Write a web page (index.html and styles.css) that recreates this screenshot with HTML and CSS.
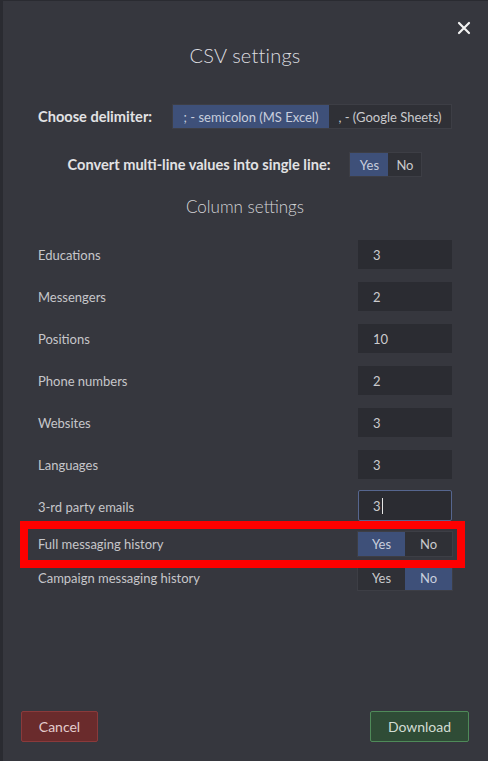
FILE: index.html
```html
<!DOCTYPE html>
<html>
<head>
<meta charset="utf-8">
<link rel="stylesheet" href="styles.css">
</head>
<body>
<div class="panel">
  <button class="close" aria-label="Close">
    <svg width="14" height="14" viewBox="0 0 14 14"><path d="M2 2 L12 12 M12 2 L2 12" stroke="#f2f2f2" stroke-width="2.2" stroke-linecap="round"/></svg>
  </button>
  <h1 class="title">CSV settings</h1>

  <div class="delim-row">
    <span class="strong-label">Choose delimiter:</span>
    <div class="seg seg-delim">
      <span class="seg-item active">; - semicolon (MS Excel)</span>
      <span class="seg-item">, - (Google Sheets)</span>
    </div>
  </div>

  <div class="convert-row">
    <span class="strong-label">Convert multi-line values into single line:</span>
    <div class="seg seg-small">
      <span class="seg-item active yes">Yes</span>
      <span class="seg-item no">No</span>
    </div>
  </div>

  <h2 class="subtitle">Column settings</h2>

  <div class="rows">
    <div class="row"><span class="label">Educations</span><div class="input">3</div></div>
    <div class="row"><span class="label">Messengers</span><div class="input">2</div></div>
    <div class="row"><span class="label">Positions</span><div class="input">10</div></div>
    <div class="row"><span class="label">Phone numbers</span><div class="input">2</div></div>
    <div class="row"><span class="label">Websites</span><div class="input">3</div></div>
    <div class="row"><span class="label">Languages</span><div class="input">3</div></div>
    <div class="row"><span class="label">3-rd party emails</span><div class="input focused">3<span class="caret"></span></div></div>
  </div>

  <div class="toggles">
    <div class="trow highlighted"><span class="label">Full messaging history</span>
      <div class="seg seg-wide"><span class="seg-item active">Yes</span><span class="seg-item">No</span></div>
    </div>
    <div class="trow"><span class="label">Campaign messaging history</span>
      <div class="seg seg-wide"><span class="seg-item">Yes</span><span class="seg-item active">No</span></div>
    </div>
  </div>

  <div class="footer">
    <button class="btn cancel">Cancel</button>
    <button class="btn download">Download</button>
  </div>
</div>
</body>
</html>
```

FILE: styles.css
```css
* { box-sizing: border-box; }
html, body { margin: 0; padding: 0; }
body {
  background: #2a2b31;
  font-family: Lato, "Open Sans", sans-serif;
  color: #cfcfd2;
  width: 488px;
  height: 761px;
  overflow: hidden;
}
.panel {
  position: relative;
  margin-left: 3px;
  margin-top: 1px;
  height: 760px;
  background: #36373e;
  padding: 42px 36px 19px 35px;
  display: flex;
  flex-direction: column;
}
.close {
  position: absolute;
  top: 20px;
  right: 17px;
  background: none;
  border: 0;
  padding: 0;
  width: 14px;
  height: 14px;
  display: flex;
}
.title {
  margin: 0;
  font-weight: 300;
  font-size: 20px;
  line-height: 24px;
  text-align: center;
  color: #dedee0;
  letter-spacing: 0.2px;
}
.strong-label {
  font-weight: 700;
  font-size: 14.6px;
  color: #e2e2e4;
  white-space: nowrap;
}
.delim-row {
  margin-top: 37px;
  display: flex;
  align-items: center;
  justify-content: space-between;
  height: 25px;
}
.seg {
  display: flex;
  flex-shrink: 0;
  height: 25px;
  background: #2f3036;
  border: 1px solid #3d3e45;
}
.seg-item {
  display: flex;
  align-items: center;
  justify-content: center;
  font-size: 13px;
  color: #c9c9cc;
  white-space: nowrap;
}
.seg-item.active {
  background: #3e5079;
  color: #c8cedd;
}
.seg-delim .seg-item:first-child { width: 156px; }
.seg-delim .seg-item:last-child { width: 122px; }
.convert-row {
  margin-top: 23px;
  display: flex;
  justify-content: center;
  align-items: center;
  gap: 19px;
  height: 25px;
}
.seg-small .yes { width: 38px; }
.seg-small .no { width: 33px; }
.subtitle {
  margin: 20px 0 0;
  font-weight: 300;
  font-size: 17px;
  line-height: 20px;
  text-align: center;
  color: #d4d4d7;
}
.rows {
  margin-top: 23px;
  display: flex;
  flex-direction: column;
  gap: 13px;
}
.row, .trow {
  display: flex;
  justify-content: space-between;
  align-items: center;
}
.label {
  font-size: 13px;
  color: #c6c6ca;
}
.input {
  width: 94px;
  height: 29px;
  background: #2b2c32;
  font-size: 13px;
  color: #cbcbce;
  padding-left: 15px;
  display: flex;
  align-items: center;
}
.input.focused {
  border: 1px solid #56668f;
  border-radius: 2px;
  padding-left: 14px;
  height: 31px;
  margin-top: -2px;
}
.caret {
  display: inline-block;
  width: 1px;
  height: 16px;
  background: #e6e6e6;
  margin-left: 1px;
}
.toggles {
  margin-top: 10px;
  display: flex;
  flex-direction: column;
  gap: 8px;
}
.trow { height: 26px; }
.seg-wide {
  height: 26px;
  width: 96px;
  margin-right: -1px;
}
.seg-wide .seg-item { flex: 1; }
.highlighted { position: relative; }
.highlighted::after {
  content: "";
  position: absolute;
  left: -18px;
  right: -13px;
  top: -10px;
  bottom: -11px;
  border: 8px solid #fe0000;
  pointer-events: none;
}
.footer {
  margin-top: auto;
  display: flex;
  justify-content: space-between;
  margin-left: -17px;
  margin-right: -17px;
}
.btn {
  height: 31px;
  font-family: Lato, "Open Sans", sans-serif;
  font-size: 14px;
  border-radius: 2px;
  padding: 0;
}
.cancel {
  width: 77px;
  background: #6a2b2c;
  border: 1px solid #8a3a3b;
  color: #e4cccc;
}
.download {
  width: 99px;
  background: #2f4c36;
  border: 1px solid #4f8a59;
  color: #d2dcd3;
}
```
